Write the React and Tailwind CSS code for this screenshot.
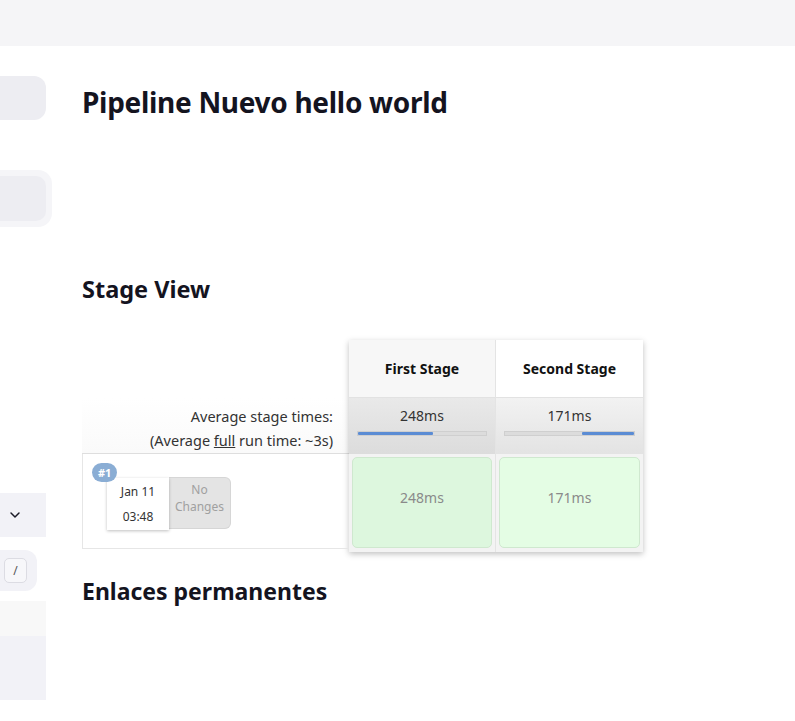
import React from "react";
import { ChevronDown } from "lucide-react";

const font = { fontFamily: "'Noto Sans', 'Open Sans', sans-serif" };

function Sidebar() {
  return (
    <div className="w-[52px] shrink-0 flex flex-col">
      <div className="h-[30px]" />
      <div className="h-[44px] w-[46px] rounded-r-[12px] bg-[#ededf2]" />
      <div className="h-[50px]" />
      <div className="h-[57px] w-[52px] rounded-r-[14px] bg-[#f5f5f8] p-[6px] pl-0">
        <div className="h-full w-full rounded-r-[10px] bg-[#ededf2]" />
      </div>
      <div className="h-[266px]" />
      <div className="h-[44px] w-[46px] bg-[#f2f2f7] flex items-center pl-[7px]">
        <ChevronDown className="w-[16px] h-[16px] text-[#1a1a26]" strokeWidth={2.2} />
      </div>
      <div className="h-[13px]" />
      <div className="h-[41px] w-[37px] rounded-r-[12px] bg-[#f2f2f7] flex items-center pl-[4px]">
        <div className="w-[23px] h-[25px] rounded-[5px] border border-[#dcdce3] bg-[#f7f7fa] flex items-center justify-center text-[12px] text-[#555]">
          /
        </div>
      </div>
      <div className="h-[10px]" />
      <div className="h-[35px] w-[46px] bg-[#f8f8f8]" />
      <div className="h-[64px] w-[46px] bg-[#f2f2f7]" />
    </div>
  );
}

function StageView() {
  return (
    <div className="flex text-[#333]">
      {/* left column */}
      <div className="w-[267px] flex flex-col">
        <div className="h-[58px]" />
        <div className="h-[56px] flex flex-col items-end justify-center pt-[4px] pr-[16px] text-[14.5px] leading-[24px] text-[#333] border-b border-[#dedede] bg-gradient-to-b from-white to-[#fafafa]">
          <div>Average stage times:</div>
          <div>
            (Average <span className="underline">full</span> run time: ~3s)
          </div>
        </div>
        <div className="h-[95px] border border-t-0 border-[#e6e6e6] relative">
          <div className="absolute left-[24px] top-[24px] flex">
            <div className="w-[62px] h-[52px] bg-white shadow-[0_1px_3px_rgba(0,0,0,0.25)] flex flex-col items-center justify-center gap-[9px] text-[12px] leading-[16px] text-[#333] relative z-10">
              <div>Jan 11</div>
              <div>03:48</div>
            </div>
            <div className="w-[62px] h-[52px] -mt-[1px] bg-[#e4e4e4] rounded-r-[6px] border border-[#d6d6d6] border-l-0 flex flex-col items-center pt-[3px] text-[12px] leading-[17px] text-[#a0a0a0]">
              <div>No</div>
              <div>Changes</div>
            </div>
          </div>
          <div className="absolute left-[9px] top-[9px] z-20 h-[19px] px-[6px] rounded-full bg-[#8aadd4] text-white text-[11px] font-bold leading-[19px]">
            #1
          </div>
        </div>
      </div>
      {/* stage columns */}
      <div className="flex shadow-[0_2px_6px_rgba(0,0,0,0.25)] bg-[#f3f3f3]">
        <StageColumn
          name="First Stage"
          headBg="bg-[#f7f7f7]"
          avgBg="from-[#e9e9e9] to-[#dcdcdc]"
          time="248ms"
          bar={<div className="h-full w-[75px] bg-[#5b8cd4] rounded-[1px]" />}
          cellBg="bg-[#ddf7de]"
          border="border-r border-[#e4e4e4]"
        />
        <StageColumn
          name="Second Stage"
          headBg="bg-white"
          avgBg="from-[#f2f2f2] to-[#e3e3e3]"
          time="171ms"
          bar={<div className="h-full w-[52px] ml-auto bg-[#5b8cd4] rounded-[1px]" />}
          cellBg="bg-[#e4fde4]"
        />
      </div>
    </div>
  );
}

function StageColumn({ name, headBg, avgBg, time, bar, cellBg, border = "" }) {
  return (
    <div className={`w-[147px] flex flex-col ${border}`}>
      <div className={`h-[58px] ${headBg} flex items-center justify-center text-[14px] font-bold text-[#111] border-b border-[#e2e2e2]`}>
        {name}
      </div>
      <div className={`h-[56px] bg-gradient-to-b ${avgBg} flex flex-col items-center pt-[8px] px-[8px]`}>
        <div className="text-[14px] leading-[20px] text-[#333]">{time}</div>
        <div className="mt-[5px] w-full h-[5px] bg-[#dcdcdc] border border-[#cfcfcf] flex">{bar}</div>
      </div>
      <div className="h-[98px] p-[3px] bg-[#f3f3f3]">
        <div className={`h-[91px] ${cellBg} border border-[#cfe8cf] rounded-[5px] flex items-center justify-center pb-[10px] text-[14px] text-[#8a8a8a]`}>
          {time}
        </div>
      </div>
    </div>
  );
}

export default function App() {
  return (
    <div className="w-[795px] h-[721px] bg-white overflow-hidden" style={font}>
      <div className="h-[46px] bg-[#f5f5f7]" />
      <div className="flex">
        <Sidebar />
        <div className="pl-[30px] flex flex-col">
          <h1 className="mt-[38px] text-[28px] leading-[36px] font-bold text-[#14141f] tracking-[-0.3px]">
            Pipeline Nuevo hello world
          </h1>
          <h2 className="mt-[155px] text-[23.5px] leading-[28px] font-bold text-[#14141f]">
            Stage View
          </h2>
          <div className="mt-[37px]">
            <StageView />
          </div>
          <h2 className="mt-[25px] text-[23px] leading-[28px] font-bold text-[#14141f]">
            Enlaces permanentes
          </h2>
        </div>
      </div>
    </div>
  );
}
